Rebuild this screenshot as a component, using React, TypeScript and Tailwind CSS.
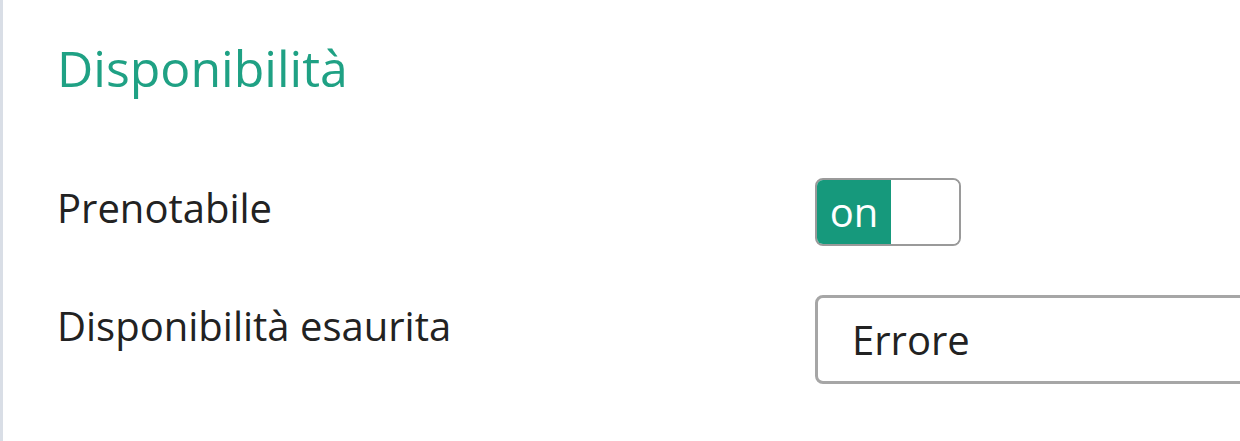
export default function App() {
  return (
    <div className="w-[1240px] h-[441px] bg-white border-l-[3px] border-[#d9dee6] overflow-hidden font-['Open_Sans',sans-serif]">
      <div className="pl-[54px] pt-[34px]">
        <h2 className="text-[50px] leading-[68px] text-[#1fa184] font-normal">Disponibilità</h2>
        <div className="mt-[76px] flex flex-col gap-[49px]">
          <div className="flex items-start">
            <span className="w-[758px] pt-[3px] text-[40px] leading-[54px] text-[#222]">Prenotabile</span>
            <div className="flex w-[146px] h-[68px] rounded-[8px] border-2 border-[#9a9a9a] overflow-hidden">
              <div className="w-[74px] bg-[#16997c] flex items-center justify-center text-white text-[40px] leading-[54px]">on</div>
              <div className="flex-1 bg-white"></div>
            </div>
          </div>
          <div className="flex items-start">
            <span className="w-[758px] pt-[4px] text-[40px] leading-[54px] text-[#222]">Disponibilità esaurita</span>
            <div className="flex-1 h-[89px] mr-[-40px] rounded-[8px] border-[3px] border-[#a6a6a6] flex items-center pl-[34px] text-[40px] leading-[54px] text-[#222]">
              Errore
            </div>
          </div>
        </div>
      </div>
    </div>
  );
}
